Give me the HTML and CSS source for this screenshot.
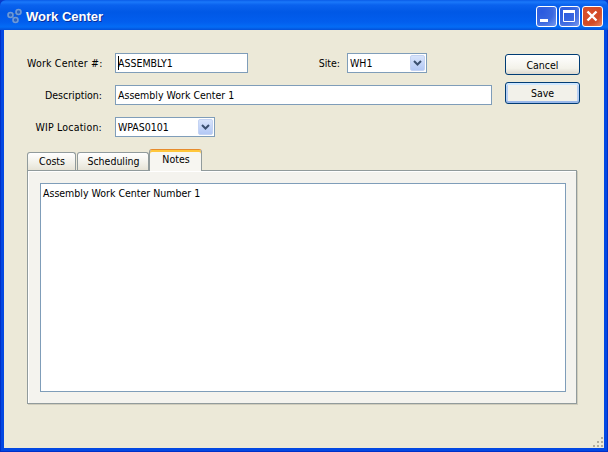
FILE: index.html
```html
<!DOCTYPE html>
<html lang="en">
<head>
<meta charset="utf-8">
<title>Work Center</title>
<link rel="stylesheet" href="styles.css">
</head>
<body>
<div class="window">
  <header class="titlebar">
    <svg class="app-icon" width="18" height="16" viewBox="0 0 18 16">
      <path d="M5 7l7-3M5 7l5 5M12 4l-2 8" stroke="#2f5ea8" fill="none"/>
      <g fill="#2a62c0" stroke="#6f9ad6" stroke-width="1.600">
        <circle cx="4.500" cy="7" r="2.500"/>
        <circle cx="12.500" cy="4" r="2.500"/>
        <circle cx="9.500" cy="12" r="2.500"/>
      </g>
    </svg>
    <span class="title">Work Center</span>
    <div class="win-buttons">
      <span class="win-btn"><svg width="21" height="21" viewBox="0 0 21 21"><rect x="4" y="13" width="8" height="3" fill="#fff"/></svg></span>
      <span class="win-btn"><svg width="21" height="21" viewBox="0 0 21 21"><path d="M4.500 4.500h11v11h-11z" fill="none" stroke="#fff"/><rect x="4" y="4" width="12" height="3" fill="#fff"/></svg></span>
      <span class="win-btn close"><svg width="21" height="21" viewBox="0 0 21 21"><path d="M5.500 5.500l9 9M14.500 5.500l-9 9" stroke="#fff" stroke-width="2.400"/></svg></span>
    </div>
  </header>
  <main class="client">
    <div class="top">
      <div class="form">
        <div class="row">
          <label class="label wide">Work Center #:</label>
          <div class="input w-number"><span class="caret"></span>ASSEMBLY1</div>
          <label class="label site-label">Site:</label>
          <div class="input select w-site">WH1<span class="arrow"><svg width="9" height="6" viewBox="0 0 9 6"><path d="M1 1l3.500 3.500L8 1" fill="none" stroke="#3b5070" stroke-width="2"/></svg></span></div>
        </div>
        <div class="row">
          <label class="label">Description:</label>
          <div class="input w-desc">Assembly Work Center 1</div>
        </div>
        <div class="row">
          <label class="label wide">WIP Location:</label>
          <div class="input select w-wip">WPAS0101<span class="arrow"><svg width="9" height="6" viewBox="0 0 9 6"><path d="M1 1l3.500 3.500L8 1" fill="none" stroke="#3b5070" stroke-width="2"/></svg></span></div>
        </div>
      </div>
      <div class="actions">
        <button class="btn">Cancel</button>
        <button class="btn default">Save</button>
      </div>
    </div>
    <div class="tabs">
      <div class="tab">Costs</div>
      <div class="tab">Scheduling</div>
      <div class="tab active">Notes</div>
    </div>
    <section class="pane">
      <div class="notes">Assembly Work Center Number 1</div>
    </section>
    <div class="grip">
      <i></i><i></i><i></i><i></i><i></i><i></i>
    </div>
  </main>
</div>
</body>
</html>
```
FILE: styles.css
```css
* { box-sizing: border-box; }
html, body { margin: 0; padding: 0; }
body {
  width: 608px;
  height: 452px;
  overflow: hidden;
  background: #0a3bc8;
  font-family: "DejaVu Sans Condensed", "Noto Sans", sans-serif;
  font-size: 10.500px;
  color: #000;
}
.window {
  width: 608px;
  height: 452px;
  display: flex;
  flex-direction: column;
  background: #0348e2;
  border-radius: 6px 6px 0 0;
  overflow: hidden;
  box-shadow: inset 1px 0 #0030c8, inset -1px 0 #0030c8, inset 0 -1px #0030c8;
}
.titlebar {
  height: 30px;
  flex: none;
  display: flex;
  align-items: center;
  padding: 2px 5px 0 6px;
  background: linear-gradient(#0a5ce8 0, #1a78fa 2px, #0a62ee 5px, #0058e6 12px, #025eee 22px, #046cf5 27px, #0350d8 30px);
}
.app-icon { flex: none; margin-right: 2px; }
.title {
  color: #fff;
  font-family: "Liberation Sans", sans-serif;
  font-weight: bold;
  font-size: 13px;
  text-shadow: 1px 1px 0 #0a2f9a;
}
.win-buttons { margin-left: auto; display: flex; gap: 2px; }
.win-btn {
  width: 21px;
  height: 21px;
  border: 1px solid #fff;
  border-radius: 3px;
  background: radial-gradient(circle at 25% 25%, #2a5ae0, #3a68e0 55%, #7b9bef);
  display: flex;
  align-items: center;
  justify-content: center;
  overflow: hidden;
}
.win-btn svg { flex: none; }
.win-btn.close { background: radial-gradient(circle at 25% 25%, #d8502c, #d24a26 60%, #e88a68); }
.client {
  flex: 1;
  position: relative;
  margin: 0 4px 4px;
  padding: 23px 24px 0 23px;
  background: #ece9d8;
  display: flex;
  flex-direction: column;
}
.top { display: flex; }
.form {
  width: 465px;
  display: flex;
  flex-direction: column;
  gap: 12px;
}
.row { display: flex; align-items: center; height: 20px; }
.label {
  width: 75px;
  margin-right: 13px;
  text-align: right;
  flex: none;
  white-space: nowrap;
}
.wide { letter-spacing: 0.200px; }
.input {
  height: 20px;
  background: #fff;
  border: 1px solid #7f9db9;
  padding: 0 2px;
  line-height: 18px;
  display: flex;
  align-items: center;
  white-space: nowrap;
}
.caret { width: 1px; height: 14px; background: #000; margin-right: -1px; flex: none; }
.w-number { width: 133px; }
.site-label { width: auto; margin: 0 7px 0 auto; }
.w-site { width: 80px; margin-right: 65px; }
.w-desc { width: 377px; }
.w-wip { width: 100px; }
.select { padding-right: 1px; justify-content: space-between; }
.arrow {
  width: 15px;
  height: 16px;
  border-radius: 2px;
  background: linear-gradient(#d8e4fb, #b3c8f5);
  border: 1px solid #c4d3f3;
  display: flex;
  align-items: center;
  justify-content: center;
}
.actions {
  margin-left: 13px;
  padding-top: 1px;
  display: flex;
  flex-direction: column;
  gap: 7px;
}
.btn {
  width: 75px;
  height: 21px;
  padding: 0;
  font: inherit;
  color: #000;
  background: linear-gradient(#fff, #f3f2ea 70%, #dcd8ce);
  border: 1px solid #003c74;
  border-radius: 3px;
}
.btn.default {
  height: 22px;
  box-shadow: inset 0 2px #cee7ff, inset 0 -2px #9ab8ea, inset 2px 0 #b8d0f4, inset -2px 0 #b8d0f4;
  background: #f2f1ea;
}
.tabs {
  display: flex;
  align-items: flex-end;
  margin-top: 12px;
  height: 21px;
  padding-right: 0;
}
.tab {
  height: 18px;
  width: 49px;
  margin-right: 1px;
  padding-left: 1px;
  border: 1px solid #919b9c;
  border-bottom: 0;
  border-radius: 3px 3px 0 0;
  background: linear-gradient(#fff, #f1f0e8 60%, #e6e3d6);
  text-align: center;
  line-height: 17px;
}
.tab:nth-child(2) { width: 72px; margin-right: 0; }
.tab.active {
  width: 53px;
  height: 22px;
  margin: 0 0 -1px;
  background: #f7f6f1;
  border-top: 1px solid #e68b2c;
  box-shadow: inset 0 2px #ffc73c;
  line-height: 19px;
  position: relative;
  z-index: 1;
}
.pane {
  width: 550px;
  height: 234px;
  padding: 12px 10px 11px 12px;
  background: #f4f3ee;
  border: 1px solid #919b9c;
  box-shadow: inset 1px 1px #fff, 1px 1px 0 #d0cdbd;
}
.notes {
  height: 100%;
  background: #fff;
  border: 1px solid #7f9db9;
  padding: 2px;
  line-height: 15px;
}
.grip {
  position: absolute;
  right: 0;
  bottom: 0;
  width: 11px;
  height: 11px;
  display: grid;
  grid-template-columns: repeat(3, 2px);
  grid-template-rows: repeat(3, 2px);
  gap: 2px;
  justify-content: end;
  align-content: end;
  padding: 0 1px 1px 0;
}
.grip i { background: #b0ac9c; }
.grip i:nth-child(1) { grid-area: 1 / 3; }
.grip i:nth-child(2) { grid-area: 2 / 2; }
.grip i:nth-child(3) { grid-area: 2 / 3; }
.grip i:nth-child(4) { grid-area: 3 / 1; }
.grip i:nth-child(5) { grid-area: 3 / 2; }
.grip i:nth-child(6) { grid-area: 3 / 3; }
```
